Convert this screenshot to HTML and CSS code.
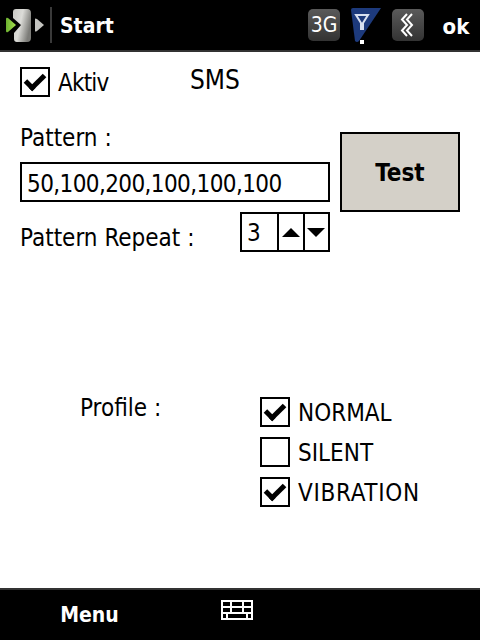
FILE: index.html
```html
<!DOCTYPE html>
<html lang="en">
<head>
    <meta charset="UTF-8">
    <meta name="viewport" content="width=device-width, initial-scale=1.0">
    <title>SMS Vibration</title>
    <link rel="stylesheet" href="styles.css">
</head>
<body>

    <!-- Title bar -->
    <header class="topbar">
        <div class="start-logo">
            <svg width="50" height="50" viewBox="0 0 50 50">
                <defs>
                    <linearGradient id="pill" x1="0" y1="0" x2="1" y2="0.4">
                        <stop offset="0" stop-color="#c8c8c4"/>
                        <stop offset="0.5" stop-color="#dcdcd8"/>
                        <stop offset="1" stop-color="#7c7c78"/>
                    </linearGradient>
                    <linearGradient id="green" x1="0" y1="0" x2="1" y2="0">
                        <stop offset="0" stop-color="#6cb030"/>
                        <stop offset="1" stop-color="#a6e04e"/>
                    </linearGradient>
                </defs>
                <path d="M6 19 Q6 17 8 18 L16 25 L8 32 Q6 33 6 31 Z" fill="url(#green)"/>
                <path d="M13 12 Q13 9 16 9 L27 9 Q31 9 31 13 L31 38 Q31 42 27 42 L17 42 Q14 42 14 39 L14 33 L21 25 L13 18 Z" fill="url(#pill)"/>
                <path d="M35 19 Q35 18 37 19 L44 25 L37 31 Q35 32 35 31 Z" fill="#c4c4c0"/>
            </svg>
        </div>
        <span class="title">Start</span>
        <div class="tray">
            <div class="tray-btn"><span class="net">3G</span></div>
            <svg class="signal" width="32" height="44" viewBox="0 0 32 44">
                <path d="M1 7 Q1 5 3 5 L31 5 L9 38 Q7 40 5 38 Z" fill="#1d3a7c"/>
                <path d="M6 12 H18 L13 20 V26 H11 V20 Z" stroke="#d8e0f0" stroke-width="2" fill="none"/>
                <rect x="10" y="37" width="4" height="4" fill="#fff"/>
            </svg>
            <div class="tray-btn">
                <svg width="18" height="24" viewBox="0 0 18 24" fill="none" stroke="#fff" stroke-width="2">
                    <path d="M8 1 L3 6.500 L8 12 L3 17.500 L8 23"/>
                    <path d="M13 1 L8 6.500 L13 12 L8 17.500 L13 23"/>
                </svg>
            </div>
            <span class="ok">ok</span>
        </div>
    </header>

    <main class="content">
        <div class="top-row">
            <label class="check aktiv">
                <span class="box on"></span>
                <span class="check-text">Aktiv</span>
            </label>
            <span class="sms">SMS</span>
        </div>

        <div class="pattern-grid">
            <div class="pattern-left">
                <div class="label">Pattern :</div>
                <div class="textbox">50,100,200,100,100,100</div>
            </div>
            <button class="test-btn" type="button">Test</button>
        </div>

        <div class="repeat-row">
            <span class="label repeat-label">Pattern Repeat :</span>
            <div class="spinner">
                <span class="spin-value">3</span>
                <span class="spin-btn"><span class="arrow-up"></span></span>
                <span class="spin-btn"><span class="arrow-down"></span></span>
            </div>
        </div>

        <div class="profile-row">
            <span class="profile-label">Profile :</span>
            <div class="profile-list">
                <label class="check"><span class="box on"></span><span class="check-text">NORMAL</span></label>
                <label class="check"><span class="box"></span><span class="check-text">SILENT</span></label>
                <label class="check"><span class="box on"></span><span class="check-text wide">VIBRATION</span></label>
            </div>
        </div>
    </main>

    <!-- Soft key bar -->
    <footer class="bottombar">
        <span class="menu">Menu</span>
        <svg class="keyboard" width="32" height="20" viewBox="0 0 32 20" fill="none" stroke="#fff" stroke-width="2">
            <rect x="1" y="1" width="30" height="18"/>
            <path d="M1 7 H31 M1 13 H31 M10 1 V13 M22 1 V13 M6 13 V19 M26 13 V19"/>
        </svg>
    </footer>

</body>
</html>
```

FILE: styles.css
```css
html, body {
    height: 100%;
}
body {
    margin: 0;
    width: 480px;
    height: 640px;
    display: flex;
    flex-direction: column;
    background-color: white;
    color: black;
    font-family: "DejaVu Sans Condensed", "DejaVu Sans", sans-serif;
    font-size: 24px;
    overflow: hidden;
}
.topbar {
    height: 50px;
    flex: none;
    display: flex;
    align-items: center;
    background-color: black;
    border-bottom: 2px solid #333;
    color: white;
    font-weight: bold;
}
.start-logo {
    width: 50px;
    height: 50px;
}
.title {
    padding-left: 8px;
    border-left: 2px solid #3a3a3a;
    height: 36px;
    line-height: 38px;
    font-size: 21px;
}
.tray {
    margin-left: auto;
    display: flex;
    align-items: center;
    height: 100%;
}
.tray-btn {
    width: 32px;
    height: 32px;
    display: flex;
    align-items: center;
    justify-content: center;
    border-radius: 5px;
    background: linear-gradient(#5a5a5a, #333);
}
.net {
    font-size: 21px;
    font-weight: normal;
}
.signal {
    margin: 0 10px;
}
.ok {
    width: 48px;
    padding: 2px 0 0 8px;
    text-align: center;
    font-size: 22px;
}
.content {
    flex: 1;
    padding: 15px 20px 0;
}
.top-row {
    display: flex;
    height: 30px;
}
.check {
    display: flex;
    align-items: center;
    gap: 8px;
    height: 30px;
}
.check-text {
    padding-top: 2px;
}
.aktiv {
    width: 170px;
    letter-spacing: -0.8px;
}
.sms {
    font-size: 26px;
    line-height: 27px;
}
.box {
    width: 26px;
    height: 26px;
    border: 2px solid black;
    display: flex;
    align-items: center;
    justify-content: center;
    flex: none;
}
.box.on::before {
    content: "";
    width: 15px;
    height: 7px;
    margin-top: -5px;
    border-left: 5px solid black;
    border-bottom: 5px solid black;
    transform: rotate(-45deg);
}
.wide {
    letter-spacing: 0.7px;
}
.pattern-grid {
    display: flex;
    gap: 10px;
    margin-top: 25px;
}
.pattern-left {
    width: 310px;
}
.label {
    height: 30px;
    line-height: 32px;
}
.textbox {
    box-sizing: border-box;
    height: 40px;
    margin-top: 10px;
    padding-left: 5px;
    border: 2px solid black;
    line-height: 40px;
    letter-spacing: -0.6px;
    white-space: nowrap;
}
.test-btn {
    width: 120px;
    height: 80px;
    margin-top: 10px;
    padding: 2px 0 0;
    background-color: #d4d0c8;
    border: 2px solid black;
    font-family: inherit;
    font-size: 24px;
    font-weight: bold;
    color: black;
}
.repeat-row {
    width: 310px;
    height: 40px;
    display: flex;
    justify-content: space-between;
}
.repeat-label {
    padding-top: 10px;
}
.spinner {
    box-sizing: border-box;
    width: 90px;
    height: 40px;
    display: flex;
    border: 2px solid black;
}
.spin-value {
    width: 35px;
    padding-left: 5px;
    box-sizing: border-box;
    line-height: 38px;
}
.spin-btn {
    flex: 1;
    display: flex;
    align-items: center;
    justify-content: center;
    border-left: 2px solid black;
}
.arrow-up, .arrow-down {
    width: 0;
    height: 0;
    border-left: 9px solid transparent;
    border-right: 9px solid transparent;
}
.arrow-up {
    border-bottom: 9px solid black;
}
.arrow-down {
    border-top: 9px solid black;
}
.profile-row {
    display: flex;
    margin-top: 145px;
    padding-left: 60px;
}
.profile-label {
    width: 180px;
    line-height: 22px;
}
.profile-list {
    display: flex;
    flex-direction: column;
    gap: 10px;
}
.bottombar {
    height: 50px;
    flex: none;
    display: flex;
    align-items: center;
    background-color: black;
    border-top: 2px solid #333;
    color: white;
    font-weight: bold;
}
.menu {
    width: 179px;
    text-align: center;
    font-size: 21px;
}
.keyboard {
    margin: -10px 0 0 42px;
}
```
